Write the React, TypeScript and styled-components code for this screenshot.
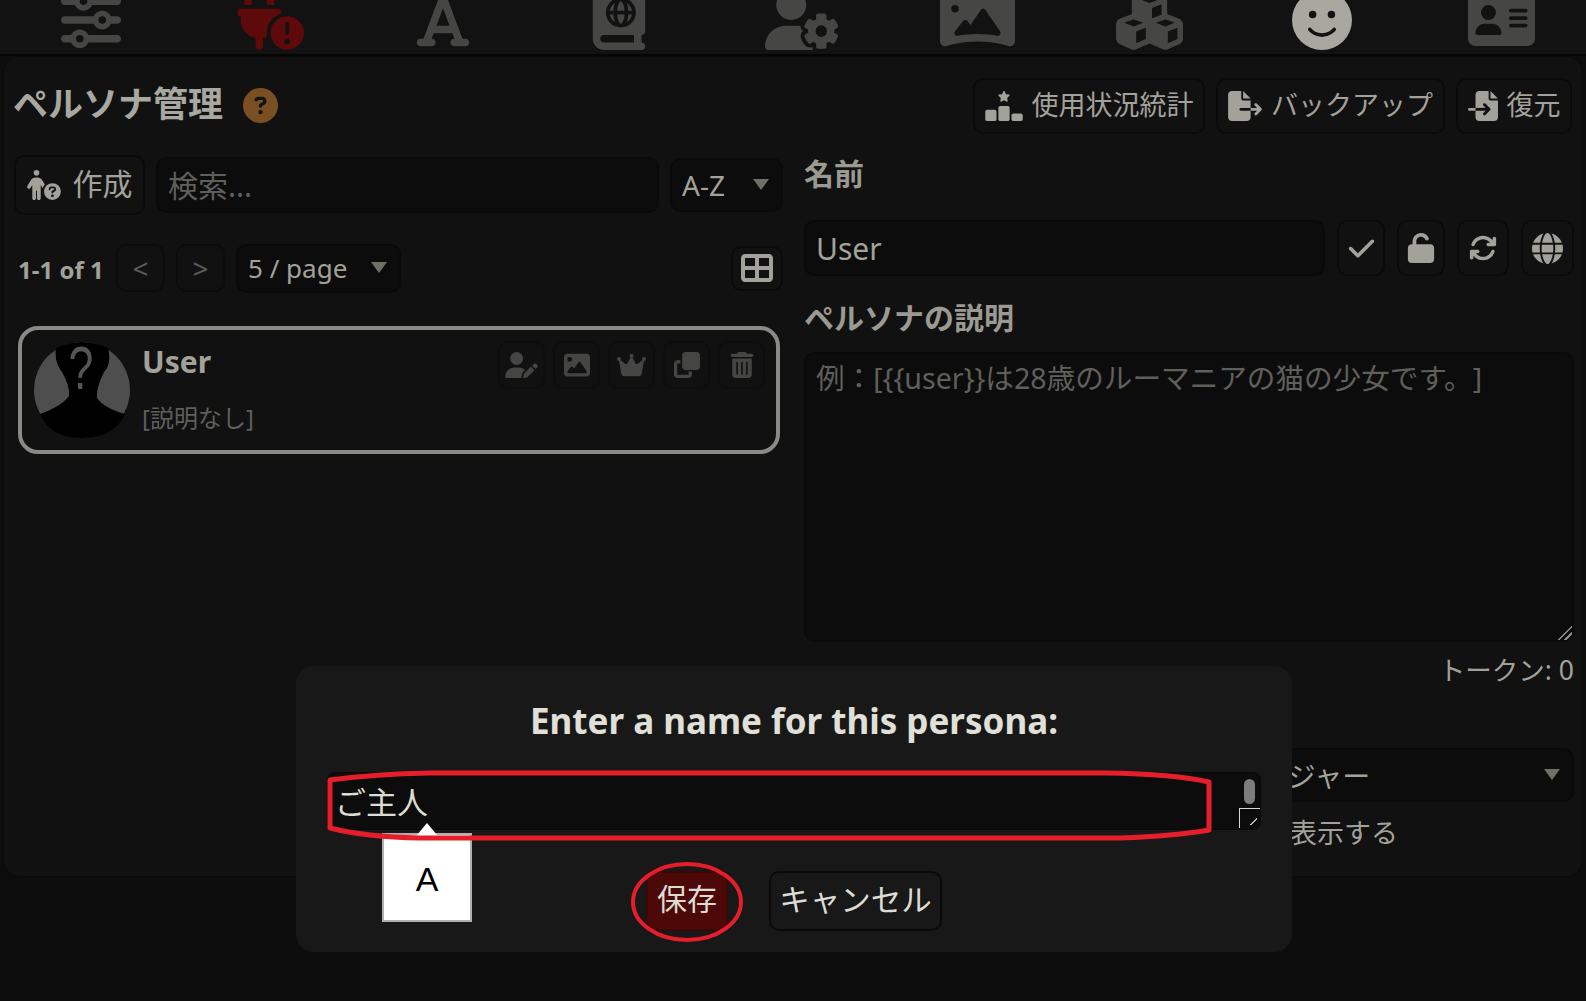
import React from "react";
import styled, { createGlobalStyle } from "styled-components";
import {
  FaAddressCard,
  FaArrowsRotate,
  FaBookAtlas,
  FaCheck,
  FaCircleQuestion,
  FaClone,
  FaCrown,
  FaCubes,
  FaFaceSmile,
  FaFileExport,
  FaFileImport,
  FaFont,
  FaGlobe,
  FaImage,
  FaPanorama,
  FaPersonCircleQuestion,
  FaPlugCircleExclamation,
  FaRankingStar,
  FaSliders,
  FaTableCellsLarge,
  FaTrashCan,
  FaUnlock,
  FaUserGear,
  FaUserPen,
} from "react-icons/fa6";

const text = "#a2a29a";
const dim = "#5f5f5b";
const edge = "#0a0a0a";
const panel = "#111111";
const well = "#0c0c0c";
const red = "#e61e2b";

const Global = createGlobalStyle`
  html, body {
    margin: 0;
    background: #0d0d0d;
    overflow: hidden;
  }
  * { box-sizing: border-box; }
  body, input, textarea {
    font-family: "Noto Sans", "Noto Sans CJK JP", sans-serif;
    text-spacing-trim: space-all;
  }
`;

const Page = styled.div`
  position: relative;
  width: 1586px;
  height: 1001px;
  overflow: hidden;
  color: ${text};
`;

const TopBar = styled.nav`
  display: flex;
  align-items: flex-end;
  height: 56px;
  padding: 0 0 4px 3px;
  background: #121212;
  border-bottom: 2px solid #050505;
  overflow: hidden;
`;

const TopIcon = styled.div<{ $tone?: string; $icon?: number }>`
  flex: 1;
  display: flex;
  justify-content: center;
  font-size: 60px;
  line-height: 0;
  color: ${(p) => p.$tone || "#464644"};
  svg {
    flex: none;
    width: ${(p) => p.$icon || 60}px;
    margin-right: ${(p) => 60 - (p.$icon || 60)}px;
  }
`;

const Panel = styled.main`
  height: 821px;
  margin: 0 3px;
  padding: 21px 10px 0;
  background: ${panel};
  border: 1px solid ${edge};
  border-radius: 16px;
`;

const Header = styled.header`
  display: flex;
  align-items: center;
  height: 56px;
  gap: 11px;
`;

const Title = styled.h2`
  margin: -5px 9px 0 -1px;
  font-size: 35px;
  line-height: 48px;
  font-weight: 700;
  color: #a8a8a0;
`;

const Help = styled.span`
  display: flex;
  margin-top: -2px;
  margin-right: auto;
  font-size: 35px;
  color: #7a4f22;
`;

const Button = styled.button<{ $w?: number; $h?: number; $size?: number; $icon?: number }>`
  display: inline-flex;
  align-items: center;
  justify-content: center;
  gap: 8px;
  flex: none;
  width: ${(p) => (p.$w ? `${p.$w}px` : "auto")};
  height: ${(p) => p.$h || 56}px;
  padding: 0;
  font-family: inherit;
  font-size: ${(p) => p.$size || 27}px;
  line-height: 1;
  color: ${text};
  background: ${panel};
  border: 2px solid ${edge};
  border-radius: 10px;
  svg {
    flex: none;
    ${(p) => (p.$icon ? `width: ${p.$icon}px;` : "")}
  }
`;

const HeaderButton = styled(Button)`
  gap: 9px;
  padding-bottom: 3px;
  svg { margin-top: 3px; }
`;

const CreateButton = styled(Button)`
  gap: 12px;
  padding-bottom: 2px;
  svg { margin-top: 2px; }
`;

const Columns = styled.div`
  display: grid;
  grid-template-columns: 769px 770px;
  column-gap: 21px;
  margin-top: 21px;
`;

const Column = styled.section`
  display: flex;
  flex-direction: column;
  min-width: 0;
`;

const SearchRow = styled.div`
  display: flex;
  align-items: center;
  gap: 11px;
  height: 60px;
`;

const Field = styled.input`
  display: block;
  flex: 1;
  min-width: 0;
  height: 56px;
  padding: 0 10px;
  font-size: 30px;
  color: ${text};
  background: ${well};
  border: 2px solid ${edge};
  border-radius: 10px;
  outline: none;
  &::placeholder { color: ${dim}; opacity: 1; }
`;

const Select = styled.div<{ $w?: number; $h?: number; $size?: number; $top?: number }>`
  position: relative;
  display: flex;
  align-items: center;
  flex: none;
  width: ${(p) => (p.$w ? `${p.$w}px` : "100%")};
  height: ${(p) => p.$h || 54}px;
  margin-top: ${(p) => p.$top || 0}px;
  padding-left: 10px;
  font-size: ${(p) => p.$size || 28}px;
  white-space: nowrap;
  overflow: hidden;
  background: ${well};
  border: 2px solid ${edge};
  border-radius: 10px;
  &::after {
    content: "";
    position: absolute;
    right: 12px;
    top: 50%;
    margin-top: -6px;
    border-style: solid;
    border-width: 11px 8px 0;
    border-color: #707069 transparent transparent;
  }
`;

const PagerRow = styled.div`
  display: flex;
  align-items: center;
  height: 50px;
  margin-top: 28px;
  padding-left: 4px;
`;

const Count = styled.span`
  width: 98px;
  padding-top: 3px;
  font-size: 24px;
  font-weight: 700;
`;

const PageButton = styled(Button)`
  margin-right: 11px;
  color: #5c5c58;
  border-color: #0c0c0c;
  font-size: 28px;
`;

const Spacer = styled.span`
  flex: 1;
`;

const Card = styled.article`
  display: flex;
  gap: 12px;
  height: 128px;
  margin: 33px 3px 0 4px;
  padding: 12px 0 0 12px;
  border: 4px solid #8a8a86;
  border-radius: 20px;
`;

const Avatar = styled.svg`
  flex: none;
  width: 96px;
  height: 96px;
`;

const CardBody = styled.div`
  flex: 1;
  display: flex;
  flex-direction: column;
`;

const CardHead = styled.div`
  display: flex;
  height: 47px;
`;

const CardName = styled.strong`
  flex: 1;
  padding-top: 2px;
  font-size: 30px;
  line-height: 36px;
`;

const CardActions = styled.div`
  display: flex;
  gap: 8px;
  margin-top: -1px;
  margin-right: 11px;
`;

const CardAction = styled.span<{ $icon?: number }>`
  display: flex;
  align-items: center;
  justify-content: center;
  width: 47px;
  height: 48px;
  font-size: 26px;
  color: #454543;
  border: 2px solid #0e0e0e;
  border-radius: 10px;
  svg {
    flex: none;
    width: ${(p) => p.$icon || 26}px;
  }
`;

const CardText = styled.span`
  margin-top: 13px;
  font-size: 24px;
  line-height: 32px;
  color: ${dim};
`;

const Label = styled.h3<{ $top?: number }>`
  margin: ${(p) => p.$top || 0}px 0 0;
  font-size: 30px;
  line-height: 38px;
  font-weight: 700;
  color: #9a9a92;
`;

const NameRow = styled.div`
  display: flex;
  gap: 12px;
  margin-top: 27px;
`;

const Description = styled.textarea`
  display: block;
  width: 100%;
  height: 290px;
  margin-top: 15px;
  padding: 6px 10px;
  font-size: 28.6px;
  line-height: 36px;
  color: ${text};
  background: ${well};
  border: 2px solid ${edge};
  border-radius: 10px;
  outline: none;
  resize: both;
  &::placeholder { color: ${dim}; opacity: 1; }
  &::-webkit-resizer {
    background: linear-gradient(
      135deg,
      transparent 50%,
      #8a8a86 50%,
      #8a8a86 58%,
      transparent 58%,
      transparent 72%,
      #8a8a86 72%,
      #8a8a86 80%,
      transparent 80%
    );
  }
`;

const Tokens = styled.div`
  margin-top: 9px;
  text-align: right;
  font-size: 26.5px;
  line-height: 38px;
`;

const CheckRow = styled.label`
  display: flex;
  align-items: center;
  gap: 4px;
  height: 38px;
  margin-top: 10px;
  font-size: 27px;
  white-space: nowrap;
`;

const Check = styled.span`
  flex: none;
  width: 24px;
  height: 24px;
  background: ${well};
  border: 2px solid ${edge};
  border-radius: 4px;
`;

const Modal = styled.div`
  position: absolute;
  left: 296px;
  top: 666px;
  width: 996px;
  height: 286px;
  padding: 31px 31px 0;
  display: flex;
  flex-direction: column;
  background: #181818;
  border-radius: 18px;
`;

const ModalTitle = styled.h3`
  margin: 0;
  text-align: center;
  font-size: 35px;
  line-height: 48px;
  font-weight: 700;
  color: #e0e0d8;
`;

const ModalInput = styled.div`
  position: relative;
  height: 58px;
  margin-top: 27px;
  padding: 8px 7px;
  font-size: 31px;
  line-height: 42px;
  color: #dcdcd4;
  background: #0c0c0c;
  border: 1px solid #080808;
  border-radius: 8px;
`;

const Thumb = styled.span`
  position: absolute;
  top: 6px;
  right: 5px;
  width: 11px;
  height: 25px;
  background: #7c7c7c;
  border-radius: 6px;
`;

const Resizer = styled.span`
  position: absolute;
  right: 0;
  bottom: 1px;
  width: 21px;
  height: 20px;
  border-top: 1px solid #d8d8d8;
  border-left: 1px solid #d8d8d8;
  &::after {
    content: "";
    position: absolute;
    right: 3px;
    bottom: 3px;
    width: 7px;
    height: 7px;
    background: linear-gradient(135deg, transparent 45%, #bbb 45%, #bbb 60%, transparent 60%);
  }
`;

const Actions = styled.div`
  display: flex;
  justify-content: center;
  gap: 41px;
  margin-top: 41px;
`;

const ModalButton = styled(Button)<{ $primary?: boolean }>`
  padding-bottom: 4px;
  color: #dcdcd4;
  background: ${(p) => (p.$primary ? "#4d0808" : "#181818")};
  border-color: ${(p) => (p.$primary ? "#3e0606" : "#0a0a0a")};
  border-radius: ${(p) => (p.$primary ? 5 : 10)}px;
`;

const Tooltip = styled.div`
  position: absolute;
  left: 86px;
  top: 167px;
  display: flex;
  align-items: center;
  justify-content: center;
  width: 90px;
  height: 89px;
  padding-top: 3px;
  font-family: "Liberation Sans", sans-serif;
  font-size: 34px;
  color: #000;
  background: #fff;
  border: 2px solid #b0b0b0;
  &::before {
    content: "";
    position: absolute;
    left: 33px;
    top: -12px;
    border-style: solid;
    border-width: 0 10px 12px;
    border-color: transparent transparent #fff;
  }
`;

const Marks = styled.svg`
  position: absolute;
  inset: 0;
  width: 100%;
  height: 100%;
  pointer-events: none;
  fill: none;
  stroke: ${red};
  stroke-linejoin: round;
`;

// icon is the width from each glyph's viewBox, react-icons forces a square otherwise
const topIcons = [
  { Icon: FaSliders },
  { Icon: FaPlugCircleExclamation, tone: "#5e0a0a", icon: 67 },
  { Icon: FaFont },
  { Icon: FaBookAtlas },
  { Icon: FaUserGear, icon: 75 },
  { Icon: FaPanorama, icon: 75 },
  { Icon: FaCubes, icon: 67 },
  { Icon: FaFaceSmile, tone: "#a8a8a0" },
  { Icon: FaAddressCard, icon: 67 },
];

const cardActions = [
  { Icon: FaUserPen, icon: 33 },
  { Icon: FaImage },
  { Icon: FaCrown, icon: 29 },
  { Icon: FaClone },
  { Icon: FaTrashCan },
];

const App = () => (
  <Page>
    <Global />
    <TopBar>
      {topIcons.map(({ Icon, tone, icon }, i) => (
        <TopIcon key={i} $tone={tone} $icon={icon}>
          <Icon />
        </TopIcon>
      ))}
    </TopBar>
    <Panel>
      <Header>
        <Title>ペルソナ管理</Title>
        <Help>
          <FaCircleQuestion />
        </Help>
        <HeaderButton $w={232} $icon={38}>
          <FaRankingStar size={30} />
          使用状況統計
        </HeaderButton>
        <HeaderButton $w={229} $icon={34}>
          <FaFileExport size={30} />
          バックアップ
        </HeaderButton>
        <HeaderButton $w={116} $icon={30}>
          <FaFileImport size={30} />
          復元
        </HeaderButton>
      </Header>
      <Columns>
        <Column>
          <SearchRow>
            <CreateButton $w={131} $h={60} $size={30} $icon={34}>
              <FaPersonCircleQuestion size={30} />
              作成
            </CreateButton>
            <Field placeholder="検索..." />
            <Select $w={113}>A-Z</Select>
          </SearchRow>
          <PagerRow>
            <Count>1-1 of 1</Count>
            <PageButton $w={49} $h={48}>
              &lt;
            </PageButton>
            <PageButton $w={49} $h={48}>
              &gt;
            </PageButton>
            <Select $w={165} $h={49} $size={26}>
              5 / page
            </Select>
            <Spacer />
            <Button $w={52} $h={45} $size={32}>
              <FaTableCellsLarge />
            </Button>
          </PagerRow>
          <Card>
            <Avatar viewBox="0 0 96 96">
              <circle cx="48" cy="48" r="48" fill="#4e4e4e" />
              <path
                fill="#000"
                d="M22 6 Q48 -6 74 6 Q78 22 70 30 Q62 46 63 56 Q70 66 91 72 Q80 96 48 96 Q16 96 6 72 Q28 64 35 54 Q36 44 28 30 Q20 20 22 6Z"
              />
              <text
                transform="translate(47 47) scale(0.72 1)"
                fontFamily="Liberation Sans"
                fontSize="62"
                textAnchor="middle"
                fill="#555555"
              >
                ?
              </text>
            </Avatar>
            <CardBody>
              <CardHead>
                <CardName>User</CardName>
                <CardActions>
                  {cardActions.map(({ Icon, icon }, i) => (
                    <CardAction key={i} $icon={icon}>
                      <Icon />
                    </CardAction>
                  ))}
                </CardActions>
              </CardHead>
              <CardText>[説明なし]</CardText>
            </CardBody>
          </Card>
        </Column>
        <Column>
          <Label $top={0}>名前</Label>
          <NameRow>
            <Field defaultValue="User" />
            <Button $w={48} $size={29}>
              <FaCheck />
            </Button>
            <Button $w={48} $size={30}>
              <FaUnlock />
            </Button>
            <Button $w={52} $size={28}>
              <FaArrowsRotate />
            </Button>
            <Button $w={53} $size={31}>
              <FaGlobe />
            </Button>
          </NameRow>
          <Label $top={23}>ペルソナの説明</Label>
          <Description placeholder="例：[{{user}}は28歳のルーマニアの猫の少女です。]" />
          <Tokens>トークン: 0</Tokens>
          <Select $top={59} $h={54} $size={28}>
            ストーリー文字列 / プロンプトマネージャー
          </Select>
          <CheckRow>
            <Check />
            キャラクターの説明をペルソナ一覧に表示する
          </CheckRow>
        </Column>
      </Columns>
    </Panel>
    <Modal>
      <ModalTitle>Enter a name for this persona:</ModalTitle>
      <ModalInput>
        ご主人
        <Thumb />
        <Resizer />
      </ModalInput>
      <Actions>
        <ModalButton $primary $w={82} $h={60} $size={30}>
          保存
        </ModalButton>
        <ModalButton $w={173} $h={60} $size={30.5}>
          キャンセル
        </ModalButton>
      </Actions>
      <Tooltip>A</Tooltip>
      <Marks viewBox="1 0 996 286">
        <path
          strokeWidth="5"
          d="M35 114 Q80 108 135 107 L810 107 Q880 108 914 116 L914 164 Q880 170 825 172 L125 172 Q70 171 35 162 Z"
        />
        <ellipse cx="392" cy="236" rx="54" ry="38" strokeWidth="4" />
      </Marks>
    </Modal>
  </Page>
);

export default App;
